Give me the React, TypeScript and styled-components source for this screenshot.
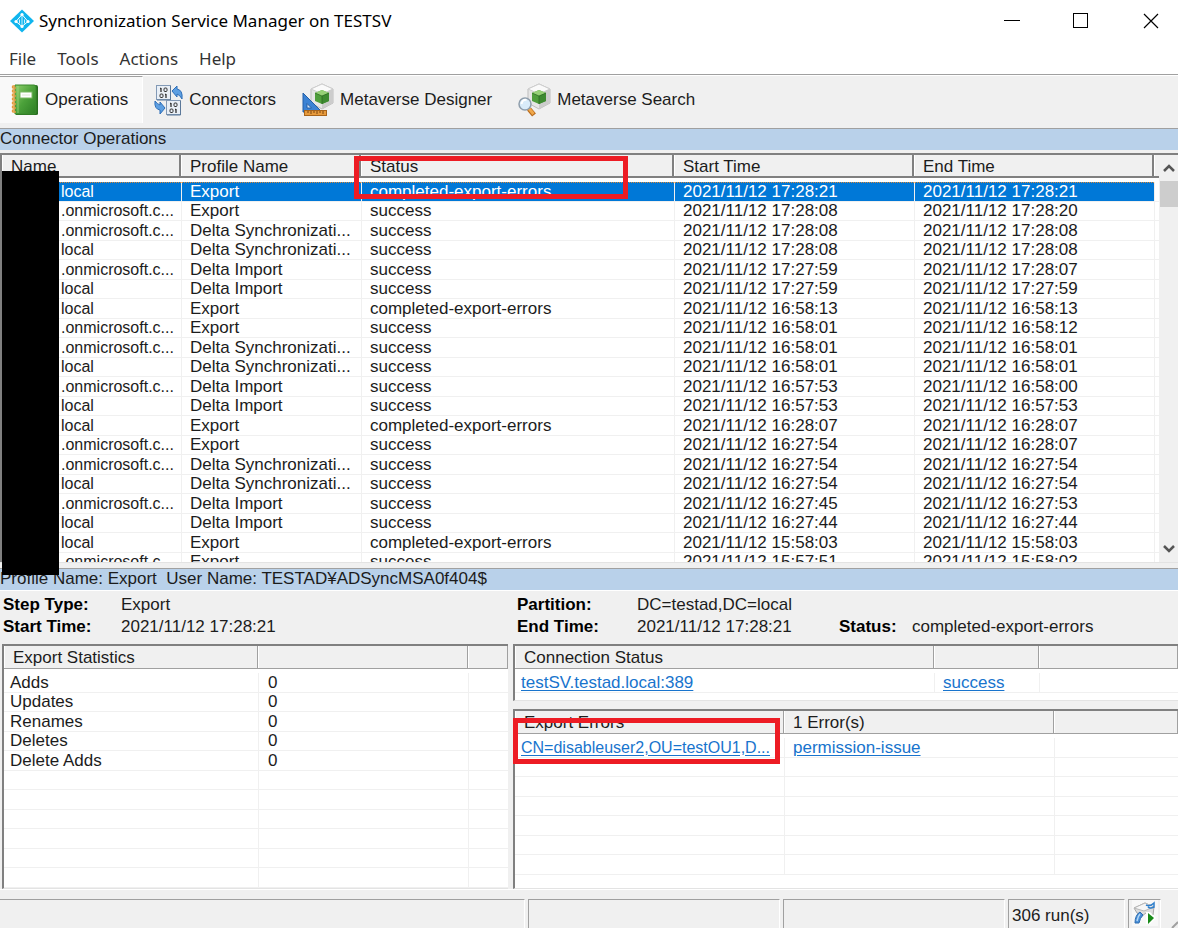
import React from "react";
import styled, { createGlobalStyle } from "styled-components";

const ui = `"Liberation Sans", "Noto Sans CJK JP", sans-serif`;
const caption = `"Noto Sans", "Noto Sans CJK JP", sans-serif`;

const GlobalStyle = createGlobalStyle`
  *, *::before, *::after { box-sizing: border-box; }
  body { margin: 0; background: #f0f0f0; }
  button { font: inherit; color: inherit; background: none; border: 0; padding: 0; }
`;

const Window = styled.div`
  display: flex;
  flex-direction: column;
  height: 100vh;
  min-height: 640px;
  overflow: hidden;
  background: #f0f0f0;
  color: #1c1c1c;
  font: 17px/20px ${ui};
`;

const TitleBar = styled.header`
  display: flex;
  align-items: center;
  flex: none;
  height: 42px;
  padding-left: 10px;
  background: #fff;
  svg { display: block; }
`;

const Title = styled.h1`
  flex: 1;
  margin: 0 0 0 5px;
  color: #000;
  font: 17px/24px ${caption};
`;

const CaptionButton = styled.button`
  display: grid;
  place-items: center;
  width: 86px;
  height: 42px;
  &:last-child { width: 54px; }
  &:first-of-type { width: 52px; }
`;

const MenuBar = styled.nav`
  display: flex;
  flex: none;
  gap: 21px;
  height: 32px;
  padding: 5px 9px 0;
  background: #fff;
  color: #333;
  font: 17px/24px ${caption};
  button { height: 24px; }
`;

const Toolbar = styled.div`
  display: flex;
  flex: none;
  height: 55px;
  border-top: 1px solid #a0a0a0;
  border-bottom: 1px solid #a0a0a0;
  box-shadow: inset 0 1px #fff;
`;

const Tool = styled.button<{ $active?: boolean }>`
  display: flex;
  align-items: center;
  gap: 6px;
  height: 47px;
  margin-top: 1px;
  padding: 0 14px 0 11px;
  background: ${(p) => (p.$active ? "#f9f9f9" : "none")};
  border-top: 1px solid ${(p) => (p.$active ? "#a0a0a0" : "transparent")};
  border-right: 1px solid ${(p) => (p.$active ? "#fff" : "transparent")};
  svg { display: block; flex: none; }
`;

const Band = styled.h2`
  flex: none;
  height: 21px;
  margin: 0;
  background: #b9d1ea;
  font: 17px/20px ${ui};
  white-space: pre;
`;

const ListView = styled.section`
  position: relative;
  display: flex;
  flex: 1 1 0;
  min-height: 0;
  margin-top: 3px;
  border-top: 2px solid #808080;
  border-left: 2px solid #808080;
  background: #fff;
`;

const Clip = styled.div`
  flex: 1;
  min-width: 0;
  overflow: hidden;
`;

const Table = styled.table`
  width: 100%;
  table-layout: fixed;
  border-collapse: separate;
  border-spacing: 0;
`;

const Th = styled.th`
  padding: 0 0 4px;
  font-weight: normal;
  text-align: left;
`;

const HeadCell = styled.div<{ $strong?: boolean }>`
  height: 23px;
  padding-left: 9px;
  overflow: hidden;
  background: #f0f0f0;
  border-right: ${(p) => (p.$strong ? "2px solid #808080" : "1px solid #a0a0a0")};
  border-bottom: ${(p) => (p.$strong ? "2px solid #808080" : "1px solid #a0a0a0")};
  box-shadow: inset 1px 0 #fff;
  line-height: 24px;
  white-space: nowrap;
`;

const Row = styled.tr<{ $selected?: boolean }>`
  height: 20px;
  &:nth-child(even) { height: 19px; }
  background: ${(p) => (p.$selected ? "#0078d7" : "#fff")};
  color: ${(p) => (p.$selected ? "#fff" : "inherit")};
  td { border-top: ${(p) => (p.$selected ? "1px dotted #d98a3a" : "0")}; }
  td:last-child { background: #fff; border-top: 0; }
`;

const Td = styled.td<{ $indent?: number; $tight?: boolean }>`
  height: inherit;
  padding: 0 0 0 ${(p) => p.$indent ?? 8}px;
  overflow: hidden;
  border-bottom: 1px solid #f0f0f0;
  border-left: 1px solid #f0f0f0;
  font-size: ${(p) => (p.$tight ? 16 : 17)}px;
  line-height: 18px;
  white-space: nowrap;
  &:first-child { border-left: 0; }
`;

const Scrollbar = styled.div`
  display: flex;
  flex-direction: column;
  flex: none;
  width: 19px;
  background: #f0f0f0;
`;

const ScrollButton = styled.button`
  display: grid;
  place-items: center;
  height: 26px;
`;

const Thumb = styled.div`
  height: 26px;
  margin-left: 1px;
  background: #cdcdcd;
`;

const Spacer = styled.div`
  flex: 1;
`;

const Redaction = styled.div`
  position: absolute;
  z-index: 2;
  top: 16px;
  left: 0;
  width: 57px;
  bottom: -13px;
  background: #000;
`;

const Highlight = styled.div<{ $top: number; $left: number; $width: number; $height: number }>`
  position: absolute;
  z-index: 2;
  top: ${(p) => p.$top}px;
  left: ${(p) => p.$left}px;
  width: ${(p) => p.$width}px;
  height: ${(p) => p.$height}px;
  border: 5px solid #ed1c24;
  pointer-events: none;
`;

const Splitter = styled.div`
  flex: none;
  height: 7px;
  background: #f0f0f0;
  border-top: 1px solid #e3e3e3;
  border-bottom: 1px solid #a0a0a0;
`;

const Details = styled.dl`
  display: grid;
  grid-template-columns: 118px minmax(0, 396fr) 120px minmax(0, 202fr) 73px minmax(0, 266fr);
  flex: none;
  margin: 0;
  padding: 3px 0 6px 3px;
  border-top: 1px solid #fff;
  line-height: 22px;
  dt { font-weight: bold; color: #000; }
  dd { margin: 0; white-space: nowrap; }
  dt:nth-of-type(3) { grid-column: 1; }
`;

const Panels = styled.div`
  display: grid;
  grid-template-columns: minmax(0, 506fr) minmax(0, 665fr);
  flex: none;
  gap: 5px;
  padding-left: 2px;
`;

const RightColumn = styled.div`
  display: flex;
  flex-direction: column;
  gap: 8px;
`;

const Panel = styled.section<{ $height?: number }>`
  position: relative;
  flex: ${(p) => (p.$height ? "none" : "1")};
  height: ${(p) => (p.$height ? `${p.$height}px` : "auto")};
  border-top: 2px solid #808080;
  border-left: 2px solid #808080;
  border-bottom: 1px solid #e3e3e3;
  background: #fff;
`;

const Link = styled.a`
  color: #1874cd;
  text-decoration: underline;
  text-underline-offset: 2px;
`;

const StatusBar = styled.footer`
  display: grid;
  grid-template-columns: minmax(0, 524fr) minmax(0, 251fr) minmax(0, 222fr) 117px 33px 14px;
  flex: none;
  gap: 3px;
  height: 39px;
  padding-top: 9px;
  border-top: 1px solid #fff;
`;

const StatusCell = styled.div`
  height: 34px;
  padding-left: 3px;
  border-top: 1px solid #a0a0a0;
  border-left: 1px solid #a0a0a0;
  border-right: 1px solid #fff;
  line-height: 32px;
  white-space: nowrap;
  &:first-child { border-left: 0; }
`;

const AppIcon = () => (
  <svg width="24" height="24" viewBox="0 0 24 24">
    <path d="M12 0.500 24 12 12 23.500 0 12Z" fill="#10b5ee" />
    <path d="M12 5.500 6 12.500l6 5 6-5Z" fill="none" stroke="#fff" strokeWidth="1" />
    <path d="M12 5.500v12M9.500 10.500v4M14.500 10.500v4" stroke="#fff" strokeWidth=".8" />
    <circle cx="12" cy="5.500" r="1.600" fill="#fff" />
    <circle cx="6" cy="12.500" r="1.600" fill="#fff" />
    <circle cx="18" cy="12.500" r="1.600" fill="#fff" />
    <circle cx="12" cy="17.500" r="1.600" fill="#fff" />
  </svg>
);

const BookIcon = () => (
  <svg width="28" height="32" viewBox="0 0 28 32">
    <defs>
      <linearGradient id="book" x1="0" y1="0" x2="1" y2="1">
        <stop offset="0" stopColor="#8fcf6b" />
        <stop offset="0.500" stopColor="#4ba13a" />
        <stop offset="1" stopColor="#2c7d24" />
      </linearGradient>
    </defs>
    <path d="M5 1h20q2 0 2 2v27q0 1-2 1H5Z" fill="#286f20" />
    <path d="M4 1h19q2 0 2 2v25q0 2-2 2H4Z" fill="url(#book)" stroke="#3b8a2d" />
    <path d="M7 2v27" stroke="#a5dc86" opacity=".7" />
    <rect x="9" y="8" width="12" height="6" fill="#fff" stroke="#78b862" />
    <path d="M11 11h8" stroke="#dcebd4" />
    {[4, 8, 12, 16, 20, 24, 28].map((y) => (
      <path key={y} d={`M5 ${y}H2q-1-1 0-2h2`} fill="none" stroke="#e39a3c" strokeWidth="1.500" />
    ))}
  </svg>
);

const Bits = ({ x, y }: { x: number; y: number }) => (
  <g transform={`translate(${x} ${y})`}>
    <rect x=".5" y=".5" width="14" height="14" fill="#e9eff6" stroke="#8299b5" />
    <path d="M14.500 1v14H1" fill="none" stroke="#5b7899" />
    <path d="M5 3v4M10 9v4M4 3.500h1M9 9.500h1" stroke="#333" strokeWidth="1.300" />
    <rect x="8" y="3" width="3" height="3.500" rx="1" fill="none" stroke="#333" />
    <rect x="4" y="9" width="3" height="3.500" rx="1" fill="none" stroke="#333" />
  </g>
);

const ConnectorsIcon = () => (
  <svg width="29" height="32" viewBox="0 0 29 32">
    <Bits x={2} y={1} />
    <Bits x={12} y={16} />
    <path d="m18 7 5-5v3q6 1 5 10-2-4-5-5v3Z" fill="#5d9fe2" stroke="#2f6fb8" />
    <path d="m11 24-5 6v-4q-6-1-5-9 2 3 5 4v-3Z" fill="#5d9fe2" stroke="#2f6fb8" />
  </svg>
);

const Cube = ({ x }: { x: number }) => (
  <g transform={`translate(${x} 0)`}>
    <path d="M12 1 23 6v14l-11 6-11-6V6Z" fill="#e6e6e6" stroke="#bdbdbd" />
    <path d="M12 1 23 6l-11 5L1 6Z" fill="#fafafa" stroke="#cfcfcf" />
    <path d="M12 11v15l11-6V6Z" fill="#cccccc" />
    <path d="m12 7 7 3v8l-7 3-7-3v-8Z" fill="#4f9e3c" />
    <path d="m12 7 7 3-7 3-7-3Z" fill="#96d077" />
    <path d="M12 13v8l7-3v-8Z" fill="#3d8a31" />
    <path d="M12 13v8M5 10l7 3 7-3" fill="none" stroke="#28651f" strokeWidth=".7" />
  </g>
);

const DesignerIcon = () => (
  <svg width="32" height="34" viewBox="0 0 32 34">
    <Cube x={8} />
    <path d="M1 10v19h19Z" fill="#3b82d4" stroke="#245fa6" />
    <path d="M5 20.500V25h4.500Z" fill="#dbe9f8" stroke="#245fa6" />
    <rect x="2.500" y="27.500" width="22" height="5" fill="#e79a3b" stroke="#a8641a" />
    <path d="M6 28v2M9 28v3M12 28v2M15 28v3M18 28v2M21 28v3" stroke="#7c4710" />
  </svg>
);

const SearchIcon = () => (
  <svg width="33" height="34" viewBox="1 0 33 34">
    <Cube x={10} />
    <path d="m12 26 5 6" stroke="#b86a1c" strokeWidth="5" />
    <path d="m11.500 25 5 6" stroke="#f0a84a" strokeWidth="3" />
    <circle cx="8" cy="21" r="6" fill="#d9ecfa" stroke="#8f9eac" strokeWidth="1.500" />
    <path d="M4.500 21q1-5 5-4" fill="none" stroke="#fff" strokeWidth="2" />
  </svg>
);

const RunIcon = () => (
  <svg width="26" height="26" viewBox="0 0 26 26">
    <rect width="26" height="26" fill="#f8f8f8" />
    <path d="M2 8 13 3l9 4-1 8-7-2-4 3-5-3Z" fill="#dedede" stroke="#a8a8a8" />
    <path d="M2 8 13 3l9 4-10 4Z" fill="#f6f6f6" stroke="#b8b8b8" />
    <path d="M3 23q0-8 5-11l3 3q-3 3-4 8Z" fill="#4a90d9" stroke="#2d6cb0" />
    <path d="M5 21q1-5 3-7" fill="none" stroke="#b4d8f6" strokeWidth="1.500" />
    <path d="M14 5q4 2 8-2v4q-4 2-6 0" fill="none" stroke="#2f7fcb" strokeWidth="1.500" />
    <path d="M14 12v12h4l6-6-6-6Z" fill="#fff" />
    <path d="m16 13 6 5-6 6Z" fill="#188a18" />
  </svg>
);

const Chevron = ({ down = false }: { down?: boolean }) => (
  <svg width="12" height="10" viewBox="0 0 12 10">
    <path d={down ? "m1 2 5 5 5-5" : "m1 8 5-5 5 5"} fill="none" stroke="#555" strokeWidth="2.500" />
  </svg>
);

const D = "2021/11/12 ";
const local = "local";
const cloud = ".onmicrosoft.c...";
const delta = "Delta Synchronizati...";
const failed = "completed-export-errors";

const runs: [string, string, string, string, string][] = [
  [local, "Export", failed, "17:28:21", "17:28:21"],
  [cloud, "Export", "success", "17:28:08", "17:28:20"],
  [cloud, delta, "success", "17:28:08", "17:28:08"],
  [local, delta, "success", "17:28:08", "17:28:08"],
  [cloud, "Delta Import", "success", "17:27:59", "17:28:07"],
  [local, "Delta Import", "success", "17:27:59", "17:27:59"],
  [local, "Export", failed, "16:58:13", "16:58:13"],
  [cloud, "Export", "success", "16:58:01", "16:58:12"],
  [cloud, delta, "success", "16:58:01", "16:58:01"],
  [local, delta, "success", "16:58:01", "16:58:01"],
  [cloud, "Delta Import", "success", "16:57:53", "16:58:00"],
  [local, "Delta Import", "success", "16:57:53", "16:57:53"],
  [local, "Export", failed, "16:28:07", "16:28:07"],
  [cloud, "Export", "success", "16:27:54", "16:28:07"],
  [cloud, delta, "success", "16:27:54", "16:27:54"],
  [local, delta, "success", "16:27:54", "16:27:54"],
  [cloud, "Delta Import", "success", "16:27:45", "16:27:53"],
  [local, "Delta Import", "success", "16:27:44", "16:27:44"],
  [local, "Export", failed, "15:58:03", "15:58:03"],
  [cloud, "Export", "success", "15:57:51", "15:58:02"],
];

const stats = ["Adds", "Updates", "Renames", "Deletes", "Delete Adds"];
const blanks = (n: number) => Array.from({ length: n }, (_, i) => i);

const Columns = ({ widths }: { widths: number[] }) => (
  <colgroup>
    {widths.map((w, i) => (
      <col key={i} style={{ width: w }} />
    ))}
    <col />
  </colgroup>
);

const Head = ({ labels, strong }: { labels: string[]; strong?: boolean }) => (
  <thead>
    <tr>
      {labels.map((label, i) => (
        <Th key={i}>
          <HeadCell $strong={strong}>{label}</HeadCell>
        </Th>
      ))}
    </tr>
  </thead>
);

const BlankRows = ({ count }: { count: number }) => (
  <>
    {blanks(count).map((i) => (
      <Row key={i}>
        <Td />
        <Td />
        <Td />
      </Row>
    ))}
  </>
);

export default function App() {
  return (
    <Window>
      <GlobalStyle />
      <TitleBar>
        <AppIcon />
        <Title>Synchronization Service Manager on TESTSV</Title>
        <CaptionButton aria-label="Minimize">
          <svg width="16" height="16"><path d="M0 7.500h16" stroke="#000" /></svg>
        </CaptionButton>
        <CaptionButton aria-label="Maximize">
          <svg width="16" height="16"><rect x=".5" y=".5" width="14" height="14" fill="none" stroke="#000" /></svg>
        </CaptionButton>
        <CaptionButton aria-label="Close">
          <svg width="16" height="16"><path d="m1 1 14 14M15 1 1 15" stroke="#000" strokeWidth="1.200" /></svg>
        </CaptionButton>
      </TitleBar>
      <MenuBar>
        <button>File</button>
        <button>Tools</button>
        <button>Actions</button>
        <button>Help</button>
      </MenuBar>
      <Toolbar>
        <Tool $active><BookIcon />Operations</Tool>
        <Tool><ConnectorsIcon />Connectors</Tool>
        <Tool><DesignerIcon />Metaverse Designer</Tool>
        <Tool><SearchIcon />Metaverse Search</Tool>
      </Toolbar>
      <Band>Connector Operations</Band>
      <ListView>
        <Clip>
          <Table>
            <Columns widths={[179, 180, 313, 240, 240]} />
            <Head strong labels={["Name", "Profile Name", "Status", "Start Time", "End Time", ""]} />
            <tbody>
              {runs.map(([name, profile, status, start, end], i) => (
                <Row key={i} $selected={i === 0}>
                  <Td $indent={59} $tight>{name}</Td>
                  <Td>{profile}</Td>
                  <Td>{status}</Td>
                  <Td>{D + start}</Td>
                  <Td>{D + end}</Td>
                  <Td />
                </Row>
              ))}
            </tbody>
          </Table>
        </Clip>
        <Scrollbar>
          <ScrollButton aria-label="Scroll up"><Chevron /></ScrollButton>
          <Thumb />
          <Spacer />
          <ScrollButton aria-label="Scroll down"><Chevron down /></ScrollButton>
        </Scrollbar>
        <Redaction />
        <Highlight $top={1} $left={352} $width={274} $height={43} />
      </ListView>
      <Splitter />
      <Band>{"Profile Name: Export  User Name: TESTAD¥ADSyncMSA0f404$"}</Band>
      <Details>
        <dt>Step Type:</dt>
        <dd>Export</dd>
        <dt>Partition:</dt>
        <dd>DC=testad,DC=local</dd>
        <dt>Start Time:</dt>
        <dd>2021/11/12 17:28:21</dd>
        <dt>End Time:</dt>
        <dd>2021/11/12 17:28:21</dd>
        <dt>Status:</dt>
        <dd>completed-export-errors</dd>
      </Details>
      <Panels>
        <Panel>
          <Table>
            <Columns widths={[254, 210]} />
            <Head labels={["Export Statistics", "", ""]} />
            <tbody>
              {stats.map((label) => (
                <Row key={label}>
                  <Td $indent={6}>{label}</Td>
                  <Td $indent={9}>0</Td>
                  <Td />
                </Row>
              ))}
              <BlankRows count={6} />
            </tbody>
          </Table>
        </Panel>
        <RightColumn>
          <Panel $height={57}>
            <Table>
              <Columns widths={[419, 105]} />
              <Head labels={["Connection Status", "", ""]} />
              <tbody>
                <Row>
                  <Td $indent={6}><Link href="#server">testSV.testad.local:389</Link></Td>
                  <Td><Link href="#connection">success</Link></Td>
                  <Td />
                </Row>
              </tbody>
            </Table>
          </Panel>
          <Panel>
            <Table>
              <Columns widths={[269, 270]} />
              <Head labels={["Export Errors", "1 Error(s)", ""]} />
              <tbody>
                <Row>
                  <Td $indent={6} $tight><Link href="#object">CN=disableuser2,OU=testOU1,D...</Link></Td>
                  <Td><Link href="#issue">permission-issue</Link></Td>
                  <Td />
                </Row>
                <BlankRows count={6} />
              </tbody>
            </Table>
            <Highlight $top={7} $left={-2} $width={267} $height={46} />
          </Panel>
        </RightColumn>
      </Panels>
      <StatusBar>
        <StatusCell />
        <StatusCell />
        <StatusCell />
        <StatusCell>306 run(s)</StatusCell>
        <StatusCell><RunIcon /></StatusCell>
        <svg width="14" height="29"><path d="m8 29 6-6" stroke="#a0a0a0" strokeWidth="2" /></svg>
      </StatusBar>
    </Window>
  );
}
